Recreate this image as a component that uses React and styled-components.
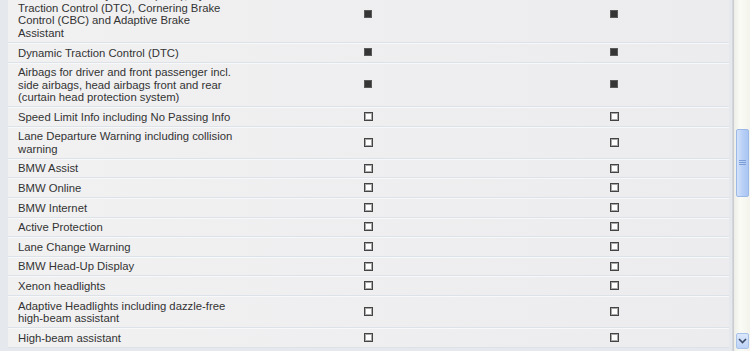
import React from "react";
import styled, { createGlobalStyle } from "styled-components";

const Global = createGlobalStyle`
  html, body { margin: 0; padding: 0; }
  body {
    background: #e5e8ec;
    font-family: "Liberation Sans", Arial, sans-serif;
    overflow: hidden;
  }
`;

const Frame = styled.div`
  display: flex;
  width: 750px;
  height: 351px;
  overflow: hidden;
  background: #e5e8ec;
`;

const Viewport = styled.div`
  flex: 1;
  overflow: hidden;
  padding: 0 3px 0 8px;
  border-right: 1px solid #d4d8dd;
`;

const Table = styled.div`
  display: flex;
  flex-direction: column;
  margin-top: ${(p) => p.$offset}px;
  background: #eeeff1;
`;

const Row = styled.div`
  display: grid;
  grid-template-columns: 237px 246px 1fr;
  align-items: center;
  border-bottom: 1px solid #dde2e8;
  box-shadow: inset 0 1px 0 #f7f8f9;
  background: linear-gradient(to right, #f1f1f2, #ececee);
`;

const Label = styled.div`
  padding: 3.5px 9px 2.6px 10px;
  font-size: 11.3px;
  line-height: 12.5px;
  color: #333;
`;

const Cell = styled.div`
  display: flex;
  justify-content: center;
  padding-left: ${(p) => p.$shift || 0}px;
`;

const Filled = styled.span`
  display: block;
  width: 8px;
  height: 8px;
  box-sizing: border-box;
  background: #353535;
  border: 1px solid #5a5a5a;
`;

const Empty = styled.span`
  display: block;
  width: 9px;
  height: 9px;
  box-sizing: border-box;
  background: #fff;
  border: 1px solid #444;
  box-shadow: inset 0 0 0 1px #a8a8a8;
`;

const Scrollbar = styled.div`
  width: 16px;
  display: flex;
  flex-direction: column;
  align-items: center;
  background: linear-gradient(to right, #eeeee8, #fbfbf6 40%, #f3f3ec);
  border-left: 1px solid #c9ccd0;
`;

const Spacer = styled.div`
  height: ${(p) => p.$h}px;
  flex: ${(p) => (p.$grow ? 1 : "none")};
`;

const Thumb = styled.div`
  width: 13px;
  height: 68px;
  box-sizing: border-box;
  border: 1px solid #9bb8e6;
  border-radius: 2px;
  background: linear-gradient(to right, #d3e2fb, #b9d0f6 50%, #aac6f3);
  display: flex;
  align-items: center;
  justify-content: center;
`;

const Button = styled.div`
  width: 13px;
  height: 16px;
  box-sizing: border-box;
  margin-bottom: 2px;
  border: 1px solid #a9c2ea;
  border-radius: 2px;
  background: linear-gradient(to bottom, #dce8fb, #bcd2f6);
  display: flex;
  align-items: center;
  justify-content: center;
`;

const rows = [
  {
    t: "Automatic Stability Control (ASC), Dynamic Traction Control (DTC), Cornering Brake Control (CBC) and Adaptive Brake Assistant",
    v: true,
  },
  { t: "Dynamic Traction Control (DTC)", v: true },
  {
    t: "Airbags for driver and front passenger incl. side airbags, head airbags front and rear (curtain head protection system)",
    v: true,
  },
  { t: "Speed Limit Info including No Passing Info", v: false },
  { t: "Lane Departure Warning including collision warning", v: false },
  { t: "BMW Assist", v: false },
  { t: "BMW Online", v: false },
  { t: "BMW Internet", v: false },
  { t: "Active Protection", v: false },
  { t: "Lane Change Warning", v: false },
  { t: "BMW Head-Up Display", v: false },
  { t: "Xenon headlights", v: false },
  { t: "Adaptive Headlights including dazzle-free high-beam assistant", v: false },
  { t: "High-beam assistant", v: false },
];

const Mark = ({ on }) => (on ? <Filled /> : <Empty />);

export default function App() {
  return (
    <Frame>
      <Global />
      <Viewport>
        <Table $offset={-14.1}>
          {rows.map((r, i) => (
            <Row key={i}>
              <Label>{r.t}</Label>
              <Cell>
                <Mark on={r.v} />
              </Cell>
              <Cell $shift={8}>
                <Mark on={r.v} />
              </Cell>
            </Row>
          ))}
        </Table>
      </Viewport>
      <Scrollbar>
        <Spacer $h={129} />
        <Thumb>
          <svg width="7" height="6" viewBox="0 0 7 6">
            <path d="M0 0.5h7M0 2.5h7M0 4.5h7" stroke="#7d9dd6" strokeWidth="1" />
          </svg>
        </Thumb>
        <Spacer $grow />
        <Button>
          <svg width="9" height="6" viewBox="0 0 9 6">
            <path d="M1 1l3.5 3.5L8 1" fill="none" stroke="#3b4b66" strokeWidth="1.6" />
          </svg>
        </Button>
      </Scrollbar>
    </Frame>
  );
}
